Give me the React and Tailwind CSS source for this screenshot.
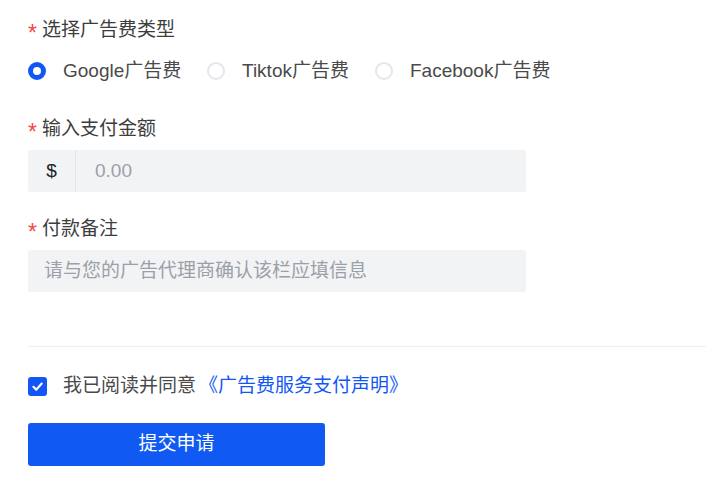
import React, { useState } from 'react';

const types = [
  { id: 'google', label: 'Google广告费', width: 'w-[179px]' },
  { id: 'tiktok', label: 'Tiktok广告费', width: 'w-[168px]' },
  { id: 'facebook', label: 'Facebook广告费', width: '' },
];

function Label({ children }) {
  return (
    <div className="flex items-center h-[24px] text-[19px] text-[#3d3d3d]">
      <span className="text-[#f5484a] mr-[4px] text-[23px] leading-none mt-[7px] w-[10px]">*</span>
      {children}
    </div>
  );
}

function Radio({ checked, label, onClick, width }) {
  return (
    <button type="button" onClick={onClick} className={`flex items-center ${width}`}>
      {checked ? (
        <span className="w-[18px] h-[18px] rounded-full border-[5px] border-[#1257f5] bg-white"></span>
      ) : (
        <span className="w-[18px] h-[18px] rounded-full border-[2px] border-[#e4e6ec] bg-white"></span>
      )}
      <span className="ml-[17px] text-[19px] text-[#4a4a4a]">{label}</span>
    </button>
  );
}

export default function App() {
  const [type, setType] = useState('google');
  const [agree, setAgree] = useState(true);

  return (
    <div
      className="w-[706px] h-[486px] bg-white pl-[28px] pt-[18px]"
      style={{ fontFamily: '"Liberation Sans", "Noto Sans CJK SC", sans-serif' }}
    >
      <Label>选择广告费类型</Label>
      <div className="flex items-center mt-[17px] h-[24px]">
        {types.map(t => (
          <Radio key={t.id} checked={type === t.id} label={t.label} width={t.width} onClick={() => setType(t.id)} />
        ))}
      </div>

      <div className="mt-[34px]">
        <Label>输入支付金额</Label>
      </div>
      <div className="mt-[9px] w-[498px] h-[42px] bg-[#f2f3f5] rounded-[3px] flex items-center">
        <div className="w-[48px] h-full flex items-center justify-center text-[19px] text-[#222] border-r border-[#e2e4e8]">$</div>
        <input
          className="flex-1 h-full bg-transparent outline-none pl-[19px] text-[19px] text-[#333] placeholder:text-[#9ba0a8]"
          placeholder="0.00"
        />
      </div>

      <div className="mt-[25px]">
        <Label>付款备注</Label>
      </div>
      <div className="mt-[9px] w-[498px] h-[42px] bg-[#f2f3f5] rounded-[3px] flex items-center">
        <input
          className="flex-1 h-full bg-transparent outline-none pl-[16px] text-[19px] text-[#333] placeholder:text-[#9ba0a8]"
          placeholder="请与您的广告代理商确认该栏应填信息"
        />
      </div>

      <div className="mt-[54px] h-px bg-[#eceef2]"></div>

      <div className="mt-[29px] flex items-center h-[20px]">
        <button
          type="button"
          onClick={() => setAgree(!agree)}
          className={`w-[19px] h-[19px] rounded-[3px] flex items-center justify-center ${agree ? 'bg-[#1257f5]' : 'border border-[#d0d3d9] bg-white'}`}
        >
          {agree && (
            <svg width="13" height="13" viewBox="0 0 12 12" fill="none">
              <path d="M2.2 6.3 L4.9 8.9 L9.9 3.3" stroke="white" strokeWidth="2" strokeLinecap="round" strokeLinejoin="round" />
            </svg>
          )}
        </button>
        <span className="ml-[16px] text-[19px] text-[#4a4a4a]">我已阅读并同意</span>
        <a className="ml-[3px] text-[19px] text-[#1257f5] cursor-pointer">《广告费服务支付声明》</a>
      </div>

      <button
        type="button"
        className="mt-[27px] w-[297px] h-[43px] bg-[#1059f3] rounded-[3px] text-white text-[19px]"
      >
        提交申请
      </button>
    </div>
  );
}
